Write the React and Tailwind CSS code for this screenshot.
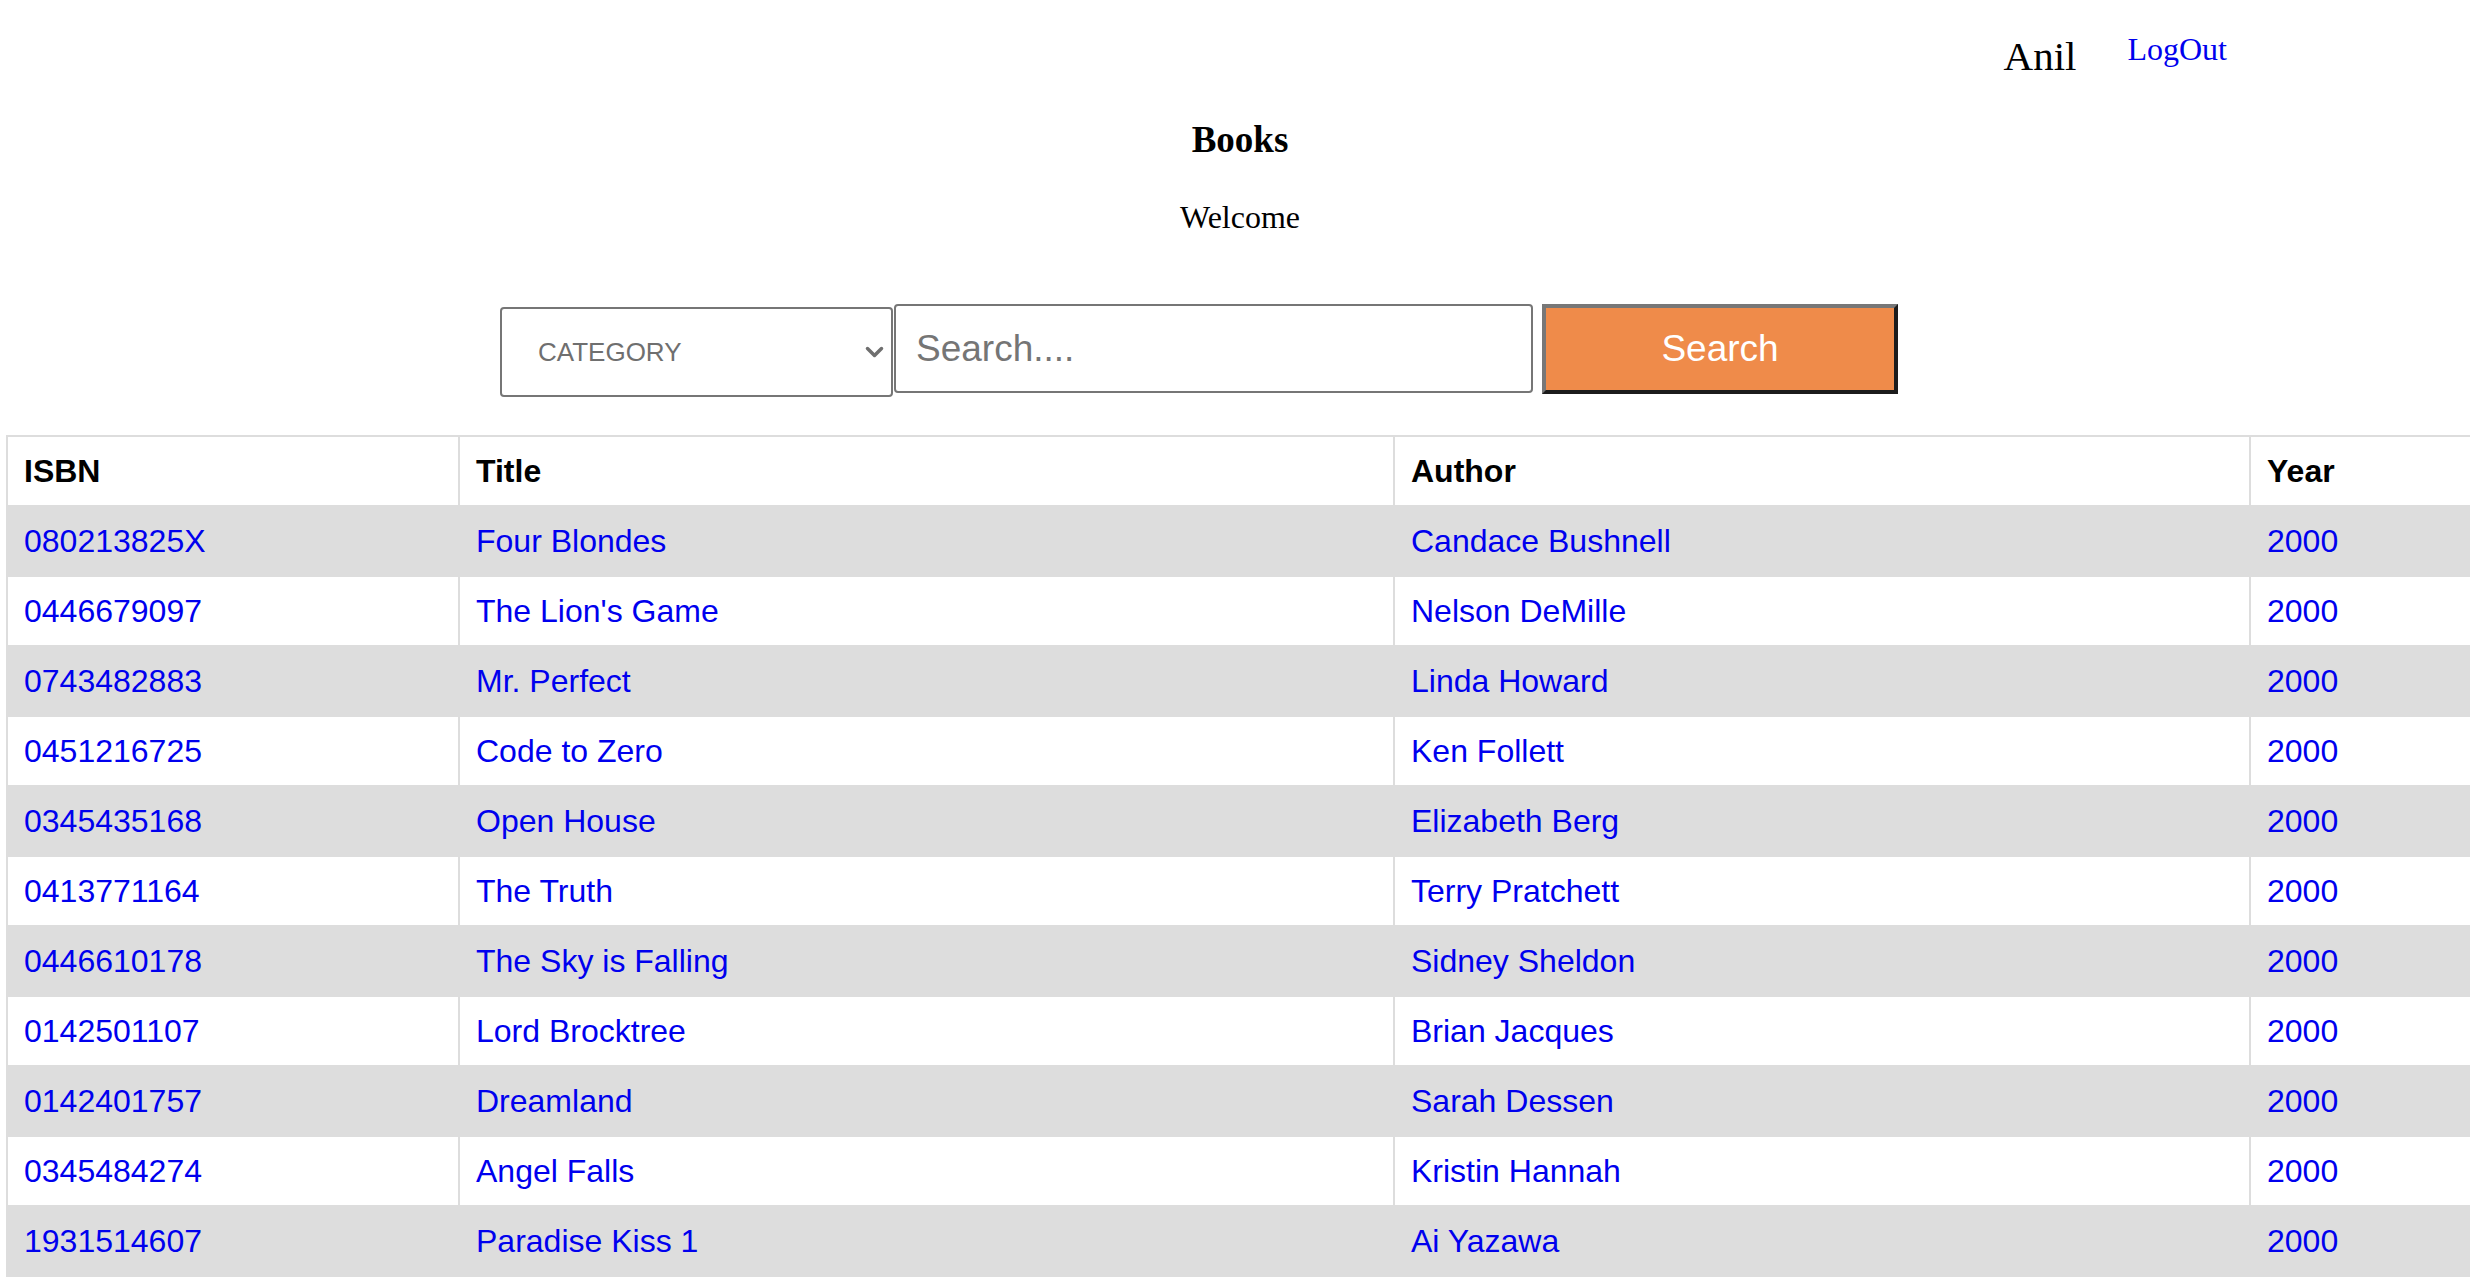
import { useState } from 'react';

const books = [
  { isbn: '080213825X', title: 'Four Blondes', author: 'Candace Bushnell', year: '2000' },
  { isbn: '0446679097', title: "The Lion's Game", author: 'Nelson DeMille', year: '2000' },
  { isbn: '0743482883', title: 'Mr. Perfect', author: 'Linda Howard', year: '2000' },
  { isbn: '0451216725', title: 'Code to Zero', author: 'Ken Follett', year: '2000' },
  { isbn: '0345435168', title: 'Open House', author: 'Elizabeth Berg', year: '2000' },
  { isbn: '0413771164', title: 'The Truth', author: 'Terry Pratchett', year: '2000' },
  { isbn: '0446610178', title: 'The Sky is Falling', author: 'Sidney Sheldon', year: '2000' },
  { isbn: '0142501107', title: 'Lord Brocktree', author: 'Brian Jacques', year: '2000' },
  { isbn: '0142401757', title: 'Dreamland', author: 'Sarah Dessen', year: '2000' },
  { isbn: '0345484274', title: 'Angel Falls', author: 'Kristin Hannah', year: '2000' },
  { isbn: '1931514607', title: 'Paradise Kiss 1', author: 'Ai Yazawa', year: '2000' },
];

function App() {
  const [category, setCategory] = useState('');
  const [query, setQuery] = useState('');

  return (
    <div className="h-[1280px] w-full overflow-hidden bg-white">
      {/* user bar */}
      <div className="flex h-[121px] items-start justify-end gap-[51px] pr-[243px] pt-[33px] font-['Liberation_Serif',serif]">
        <span className="mt-[3px] text-[41px] leading-none text-black">Anil</span>
        <a href="#" className="text-[32px] leading-none text-[#0000ee]">
          LogOut
        </a>
      </div>

      <h3 className="pl-[10px] text-center font-['Liberation_Serif',serif] text-[37px] font-bold leading-none text-black">
        Books
      </h3>
      <p className="mt-[43px] pl-[10px] text-center font-['Liberation_Serif',serif] text-[32px] leading-none text-black">
        Welcome
      </p>

      <form
        className="mt-[71px] flex items-start pl-[500px] font-['Liberation_Sans',Arial,sans-serif]"
        onSubmit={(e) => e.preventDefault()}
      >
        <div className="mt-[3px] flex h-[90px] w-[393px] items-center rounded-[4px] border-2 border-[#767676] bg-white pr-[7px]">
          <select
            className="h-full flex-1 appearance-none bg-transparent pl-[36px] text-[26px] text-[#6f6f6f] outline-none"
            value={category}
            onChange={(e) => setCategory(e.target.value)}
          >
            <option value="">CATEGORY</option>
            <option value="title">Title</option>
            <option value="author">Author</option>
            <option value="year">Year</option>
          </select>
          <svg className="h-[12px] w-[19px]" viewBox="0 0 19 12" fill="none">
            <path d="M2.5 2.5l7 7 7-7" stroke="#6f6f6f" strokeWidth="3.5" strokeLinecap="round" strokeLinejoin="round" />
          </svg>
        </div>
        <input
          type="text"
          placeholder="Search...."
          value={query}
          onChange={(e) => setQuery(e.target.value)}
          className="ml-[1px] h-[89px] w-[639px] rounded-[4px] border-2 border-[#767676] px-[20px] text-[37px] text-black placeholder-[#757575] outline-none"
        />
        <button
          type="submit"
          className="ml-[9px] h-[90px] w-[356px] border-[4px] border-t-[#777777] border-l-[#777777] border-b-[#1c1c1c] border-r-[#1c1c1c] bg-[#ef8b4a] text-[37px] text-white"
        >
          Search
        </button>
      </form>

      <div className="mt-[38px] pl-[6px]">
        <table className="w-[2700px] table-fixed border-collapse font-['Liberation_Sans',Arial,sans-serif] text-[32px]">
          <colgroup>
            <col className="w-[452px]" />
            <col className="w-[935px]" />
            <col className="w-[856px]" />
            <col />
          </colgroup>
          <thead>
            <tr className="h-[70px]">
              <th className="border-2 border-[#dddddd] px-[16px] py-0 text-left font-bold text-black">ISBN</th>
              <th className="border-2 border-[#dddddd] px-[16px] py-0 text-left font-bold text-black">Title</th>
              <th className="border-2 border-[#dddddd] px-[16px] py-0 text-left font-bold text-black">Author</th>
              <th className="border-2 border-[#dddddd] px-[16px] py-0 text-left font-bold text-black">Year</th>
            </tr>
          </thead>
          <tbody>
            {books.map((b, i) => (
              <tr key={b.isbn} className={i % 2 === 0 ? 'h-[70px] bg-[#dddddd]' : 'h-[70px] bg-white'}>
                <td className="border-2 border-[#dddddd] px-[16px] py-0">
                  <a href="#" className="text-[#0000ee]">{b.isbn}</a>
                </td>
                <td className="border-2 border-[#dddddd] px-[16px] py-0">
                  <a href="#" className="text-[#0000ee]">{b.title}</a>
                </td>
                <td className="border-2 border-[#dddddd] px-[16px] py-0">
                  <a href="#" className="text-[#0000ee]">{b.author}</a>
                </td>
                <td className="border-2 border-[#dddddd] px-[16px] py-0">
                  <a href="#" className="text-[#0000ee]">{b.year}</a>
                </td>
              </tr>
            ))}
          </tbody>
        </table>
      </div>
    </div>
  );
}

export default App;
